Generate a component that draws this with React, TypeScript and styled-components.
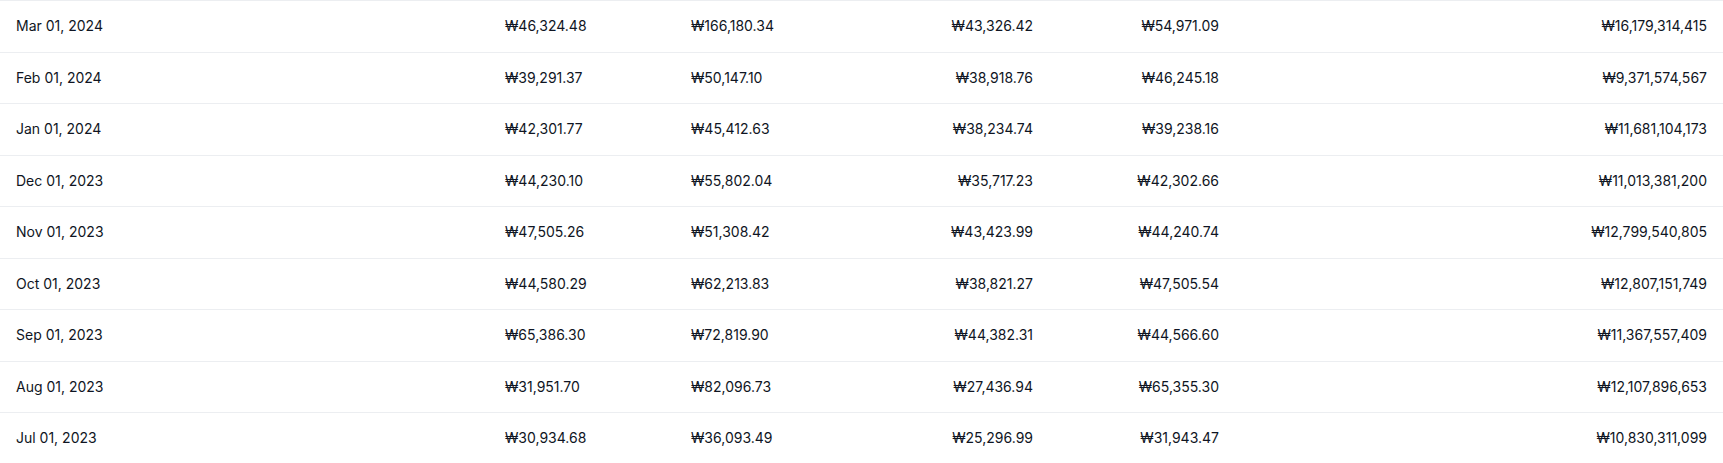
import React from "react";
import styled, { createGlobalStyle } from "styled-components";

const Global = createGlobalStyle`
  html, body { margin: 0; padding: 0; background: #ffffff; }
  body { font-family: Inter, "Noto Sans", sans-serif; }
`;

const Table = styled.div`
  width: 1723px;
  display: flex;
  flex-direction: column;
`;

const Row = styled.div`
  display: grid;
  grid-template-columns: 489px 186px 186px 188px 186px 1fr;
  height: 51.5px;
  box-sizing: border-box;
  border-top: 1px solid #eceef1;
  align-items: center;
`;

const Cell = styled.div<{ $align?: "left" | "right" }>`
  padding: 0 16px;
  font-size: 14px;
  line-height: 20px;
  color: #0f1523;
  text-align: ${(p) => p.$align ?? "left"};
  white-space: nowrap;
`;

type Item = [string, string, string, string, string, string];

const rows: Item[] = [
  ["Mar 01, 2024", "₩46,324.48", "₩166,180.34", "₩43,326.42", "₩54,971.09", "₩16,179,314,415"],
  ["Feb 01, 2024", "₩39,291.37", "₩50,147.10", "₩38,918.76", "₩46,245.18", "₩9,371,574,567"],
  ["Jan 01, 2024", "₩42,301.77", "₩45,412.63", "₩38,234.74", "₩39,238.16", "₩11,681,104,173"],
  ["Dec 01, 2023", "₩44,230.10", "₩55,802.04", "₩35,717.23", "₩42,302.66", "₩11,013,381,200"],
  ["Nov 01, 2023", "₩47,505.26", "₩51,308.42", "₩43,423.99", "₩44,240.74", "₩12,799,540,805"],
  ["Oct 01, 2023", "₩44,580.29", "₩62,213.83", "₩38,821.27", "₩47,505.54", "₩12,807,151,749"],
  ["Sep 01, 2023", "₩65,386.30", "₩72,819.90", "₩44,382.31", "₩44,566.60", "₩11,367,557,409"],
  ["Aug 01, 2023", "₩31,951.70", "₩82,096.73", "₩27,436.94", "₩65,355.30", "₩12,107,896,653"],
  ["Jul 01, 2023", "₩30,934.68", "₩36,093.49", "₩25,296.99", "₩31,943.47", "₩10,830,311,099"],
];

export default function App() {
  return (
    <>
      <Global />
      <Table>
        {rows.map((r) => (
          <Row key={r[0]}>
            <Cell>{r[0]}</Cell>
            <Cell>{r[1]}</Cell>
            <Cell>{r[2]}</Cell>
            <Cell $align="right">{r[3]}</Cell>
            <Cell $align="right">{r[4]}</Cell>
            <Cell $align="right">{r[5]}</Cell>
          </Row>
        ))}
      </Table>
    </>
  );
}
